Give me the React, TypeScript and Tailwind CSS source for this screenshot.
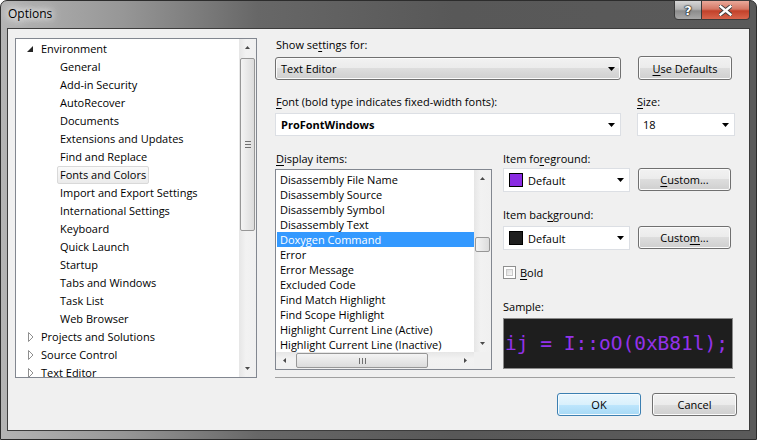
import React from 'react';

const Acc = ({ c }: { c: string }) => (
    <span className="underline decoration-1 underline-offset-[2px]">{c}</span>
);

const Tri = ({ dir = 'down', fill = '#000' }: { dir?: 'down' | 'up' | 'left' | 'right'; fill?: string }) => {
    const d = {
        down: 'M0 0h7L3.5 4z',
        up: 'M0 4h7L3.5 0z',
        left: 'M4 0v7L0 3.5z',
        right: 'M0 0v7L4 3.5z',
    }[dir];
    const vert = dir === 'down' || dir === 'up';
    return (
        <svg width={vert ? 7 : 4} height={vert ? 4 : 7} viewBox={vert ? '0 0 7 4' : '0 0 4 7'}>
            <path d={d} fill={fill} />
        </svg>
    );
};

const ScrollArrow = ({ dir }: { dir: 'down' | 'up' | 'left' | 'right' }) => (
    <div className="w-[17px] h-[17px] shrink-0 flex items-center justify-center">
        <svg width={dir === 'up' || dir === 'down' ? 5 : 3} height={dir === 'up' || dir === 'down' ? 3 : 5} viewBox={dir === 'up' || dir === 'down' ? '0 0 5 3' : '0 0 3 5'}>
            <path
                d={{ up: 'M0 3h5L2.5 0z', down: 'M0 0h5L2.5 3z', left: 'M3 0v5L0 2.5z', right: 'M0 0v5L3 2.5z' }[dir]}
                fill="#4a4a4a"
            />
        </svg>
    </div>
);

const winBtn =
    'rounded-[3px] border border-[#707070] bg-[linear-gradient(#f2f2f2_0%,#ebebeb_50%,#dddddd_50%,#cfcfcf_100%)] shadow-[inset_0_0_0_1px_#fbfbfb] flex items-center justify-center text-[11px] leading-[15px]';

const envChildren = [
    'General',
    'Add-in Security',
    'AutoRecover',
    'Documents',
    'Extensions and Updates',
    'Find and Replace',
    'Fonts and Colors',
    'Import and Export Settings',
    'International Settings',
    'Keyboard',
    'Quick Launch',
    'Startup',
    'Tabs and Windows',
    'Task List',
    'Web Browser',
];

const displayItems = [
    'Disassembly File Name',
    'Disassembly Source',
    'Disassembly Symbol',
    'Disassembly Text',
    'Doxygen Command',
    'Error',
    'Error Message',
    'Excluded Code',
    'Find Match Highlight',
    'Find Scope Highlight',
    'Highlight Current Line (Active)',
    'Highlight Current Line (Inactive)',
];

const CollapsedRow = ({ label }: { label: string }) => (
    <div className="h-[18px] flex items-center pl-[12px] shrink-0">
        <div className="w-[13px] flex items-center">
            <svg width="6" height="10" viewBox="0 0 6 10">
                <path d="M0.5 0.5L5 5L0.5 9.5z" fill="#fff" stroke="#8f8f8f" strokeWidth="1" />
            </svg>
        </div>
        <span className="whitespace-nowrap pb-px">{label}</span>
    </div>
);

const OptionsTree = () => (
    <div className="w-[242px] h-[340px] border border-[#828790] bg-white flex">
        <div className="flex-1 overflow-hidden pt-[1px] flex flex-col">
            <div className="h-[18px] flex items-center pl-[11px] shrink-0">
                <div className="w-[14px] flex items-center">
                    <svg width="6" height="6" viewBox="0 0 6 6">
                        <path d="M6 0V6H0z" fill="#262626" />
                    </svg>
                </div>
                <span className="pb-px">Environment</span>
            </div>
            {envChildren.map((item) => (
                <div key={item} className="h-[18px] flex items-center pl-[41px] shrink-0">
                    <span
                        className={
                            item === 'Fonts and Colors'
                                ? 'h-[18px] flex items-center px-[2px] pb-px border border-[#d9d9d9] rounded-[2px] bg-[linear-gradient(#fafafa,#ebebeb)] whitespace-nowrap'
                                : 'h-[18px] flex items-center px-[2px] pb-px border border-transparent whitespace-nowrap'
                        }
                    >
                        {item}
                    </span>
                </div>
            ))}
            <CollapsedRow label="Projects and Solutions" />
            <CollapsedRow label="Source Control" />
            <CollapsedRow label="Text Editor" />
        </div>
        {/* vertical scrollbar */}
        <div className="w-[17px] flex flex-col bg-[linear-gradient(90deg,#e6e6e6,#f2f2f2_40%,#f0f0f0)]">
            <ScrollArrow dir="up" />
            <div className="h-[173px] mt-[2px] mx-[1px] rounded-[2px] border border-[#979797] bg-[linear-gradient(90deg,#f4f4f4,#e8e8e8_50%,#dcdcdc)] flex flex-col items-center justify-center gap-[2px]">
                <div className="w-[6px] h-px bg-[#707070]" />
                <div className="w-[6px] h-px bg-[#707070]" />
                <div className="w-[6px] h-px bg-[#707070]" />
            </div>
            <div className="flex-1" />
            <ScrollArrow dir="down" />
        </div>
    </div>
);

const ColorCombo = ({ swatch }: { swatch: string }) => (
    <div className="w-[127px] h-[24px] border border-[#dcdfe4] bg-white flex items-center pl-[5px] pr-[5px]">
        <div className={`w-[14px] h-[14px] border border-black ${swatch}`} />
        <span className="ml-[5px] flex-1">Default</span>
        <Tri />
    </div>
);

const DisplayList = () => (
    <div className="w-[217px] h-[201px] border border-[#828790] bg-white flex flex-col">
        <div className="flex-1 flex min-h-0">
            <div className="flex-1 overflow-hidden pt-[2px]">
                {displayItems.map((item) => (
                    <div
                        key={item}
                        className={
                            item === 'Doxygen Command'
                                ? 'h-[15px] ml-[1px] pl-[3px] pb-px flex items-center bg-[#3399ff] text-white whitespace-nowrap'
                                : 'h-[15px] ml-[1px] pl-[3px] pb-px flex items-center whitespace-nowrap'
                        }
                    >
                        {item}
                    </div>
                ))}
            </div>
            <div className="w-[17px] flex flex-col bg-[linear-gradient(90deg,#e6e6e6,#f2f2f2_40%,#f0f0f0)]">
                <ScrollArrow dir="up" />
                <div className="h-[50px]" />
                <div className="h-[15px] mx-[1px] rounded-[2px] border border-[#979797] bg-[linear-gradient(90deg,#f4f4f4,#e8e8e8_50%,#dcdcdc)]" />
                <div className="flex-1" />
                <ScrollArrow dir="down" />
            </div>
        </div>
        <div className="h-[17px] flex">
            <div className="flex-1 flex bg-[linear-gradient(#e6e6e6,#f2f2f2_40%,#f0f0f0)]">
                <ScrollArrow dir="left" />
                <div className="w-[132px] my-[1px] ml-[3px] rounded-[2px] border border-[#979797] bg-[linear-gradient(#f4f4f4,#e8e8e8_50%,#dcdcdc)] flex items-center justify-center gap-[2px]">
                    <div className="w-px h-[6px] bg-[#707070]" />
                    <div className="w-px h-[6px] bg-[#707070]" />
                    <div className="w-px h-[6px] bg-[#707070]" />
                </div>
                <div className="flex-1" />
                <ScrollArrow dir="right" />
            </div>
            <div className="w-[17px] bg-[#f0f0f0]" />
        </div>
    </div>
);

export default function App() {
    return (
        <div className="w-[757px] h-[440px] bg-white font-['Open_Sans',sans-serif] text-[11px] leading-[15px] text-black">
            <div className="w-full h-full flex flex-col rounded-t-[7px] border border-[#2c2c2c] bg-[linear-gradient(90deg,#b4b4b4_0%,#979797_16%,#676767_34%,#585858_60%,#5a5a5a_100%)]">
                {/* Title bar */}
                <div className="h-[27px] shrink-0 flex items-start justify-between">
                    <div className="pl-[7px] pt-[5px] text-[12px] leading-[16px] [text-shadow:0_0_6px_#fff,0_0_10px_#fff,0_0_14px_#fff]">
                        Options
                    </div>
                    <div className="flex mr-[6px] -mt-px">
                        <div className="w-[28px] h-[20px] rounded-bl-[4px] border border-[#3a3a3a] bg-[linear-gradient(#d6d6d6,#b2b2b2_45%,#8c8c8c_55%,#a8a8a8)] flex items-center justify-center text-white font-bold text-[13px] font-['DejaVu_Sans',sans-serif] [text-shadow:0_0_1px_#000,0_0_1px_#000,0_0_2px_#000]">
                            ?
                        </div>
                        <div className="w-[48px] h-[20px] rounded-br-[4px] border border-l-0 border-[#3a3a3a] bg-[linear-gradient(#e9a99a,#d47764_45%,#c2412a_55%,#d8654c)] flex items-center justify-center">
                            <svg width="13" height="11" viewBox="0 0 13 11">
                                <path d="M1.5 1.5L11.5 9.5M11.5 1.5L1.5 9.5" stroke="#3b3b3b" strokeWidth="4.2" strokeLinecap="square" />
                                <path d="M1.5 1.5L11.5 9.5M11.5 1.5L1.5 9.5" stroke="#ffffff" strokeWidth="2.4" strokeLinecap="square" />
                            </svg>
                        </div>
                    </div>
                </div>

                {/* Client area */}
                <div className="flex-1 mx-[6px] mb-[8px] border border-[#3c3c3c] bg-[#f0f0f0] flex flex-col pt-[9px] pl-[7px]">
                    <div className="flex">
                        <OptionsTree />

                        <div className="w-[460px] ml-[18px] flex flex-col">
                            <div className="h-[15px] pl-px leading-[14px]">
                                Show se<Acc c="t" />tings for:
                            </div>
                            <div className="flex items-end mt-[3px]">
                                <div className={`w-[346px] h-[23px] ${winBtn} !justify-start pl-[5px] pr-[5px] mt-px`}>
                                    <span className="flex-1">Text Editor</span>
                                    <Tri />
                                </div>
                                <div className={`w-[94px] h-[24px] ml-[17px] ${winBtn}`}>
                                    <span>
                                        <Acc c="U" />se Defaults
                                    </span>
                                </div>
                            </div>

                            <div className="flex mt-[15px] h-[15px] leading-[14px]">
                                <div className="w-[362px] pl-px">
                                    <Acc c="F" />ont (bold type indicates fixed-width fonts):
                                </div>
                                <div>
                                    <Acc c="S" />ize:
                                </div>
                            </div>
                            <div className="flex mt-[3px]">
                                <div className="w-[346px] h-[23px] border border-[#dcdfe4] bg-white flex items-center pl-[5px] pr-[5px]">
                                    <span className="flex-1 font-bold">ProFontWindows</span>
                                    <Tri />
                                </div>
                                <div className="w-[98px] h-[23px] ml-[16px] border border-[#dcdfe4] bg-white flex items-center pl-[5px] pr-[5px]">
                                    <span className="flex-1">18</span>
                                    <Tri />
                                </div>
                            </div>

                            <div className="flex mt-[16px]">
                                <div className="flex flex-col">
                                    <div className="h-[15px] pl-px leading-[14px]">
                                        <Acc c="D" />isplay items:
                                    </div>
                                    <div className="mt-[2px]">
                                        <DisplayList />
                                    </div>
                                </div>

                                <div className="w-[232px] ml-[11px] flex flex-col">
                                    <div className="h-[15px] leading-[14px]">
                                        Item fo<Acc c="r" />eground:
                                    </div>
                                    <div className="flex mt-px">
                                        <ColorCombo swatch="bg-[#8a2be2]" />
                                        <div className={`w-[93px] h-[23px] ml-[8px] ${winBtn}`}>
                                            <span>
                                                <Acc c="C" />ustom...
                                            </span>
                                        </div>
                                    </div>

                                    <div className="h-[15px] mt-[16px] leading-[14px]">
                                        Item bac<Acc c="k" />ground:
                                    </div>
                                    <div className="flex mt-[3px]">
                                        <ColorCombo swatch="bg-[#1e1e1e]" />
                                        <div className={`w-[93px] h-[23px] ml-[8px] ${winBtn}`}>
                                            <span>
                                                Custo<Acc c="m" />...
                                            </span>
                                        </div>
                                    </div>

                                    <div className="flex items-center mt-[16px] h-[13px]">
                                        <div className="w-[13px] h-[13px] border border-[#8e8f8f] bg-white p-[2px]">
                                            <div className="w-full h-full border border-[#c9c9c9] bg-[linear-gradient(135deg,#dcdcdc,#f8f8f8)]" />
                                        </div>
                                        <span className="ml-[4px]">
                                            <Acc c="B" />old
                                        </span>
                                    </div>

                                    <div className="h-[15px] mt-[21px] leading-[14px]">Sample:</div>
                                    <div className="w-[230px] h-[51px] mt-[3px] border border-[#8a8a8a] bg-[#1e1e1e] flex items-center overflow-hidden pl-px">
                                        <span className="whitespace-nowrap font-['DejaVu_Sans_Mono',monospace] text-[19.5px] leading-[24px] text-[#9332ea]">
                                            ij = I::oO(0xB81l);
                                        </span>
                                    </div>
                                </div>
                            </div>

                            <div className="mt-[7px] h-px bg-[#a0a0a0]" />
                        </div>
                    </div>

                    {/* Bottom buttons */}
                    <div className="flex justify-end mt-[15px] pr-[12px]">
                        <div className="w-[84px] h-[23px] rounded-[3px] border border-[#3c7fb1] bg-[linear-gradient(#eaf6fd_0%,#d9f0fc_50%,#bee6fd_50%,#a7d9f5_100%)] shadow-[inset_0_0_0_1px_#f4fbff] flex items-center justify-center">
                            OK
                        </div>
                        <div className={`w-[85px] h-[23px] ml-[11px] ${winBtn}`}>Cancel</div>
                    </div>
                </div>
            </div>
        </div>
    );
}
